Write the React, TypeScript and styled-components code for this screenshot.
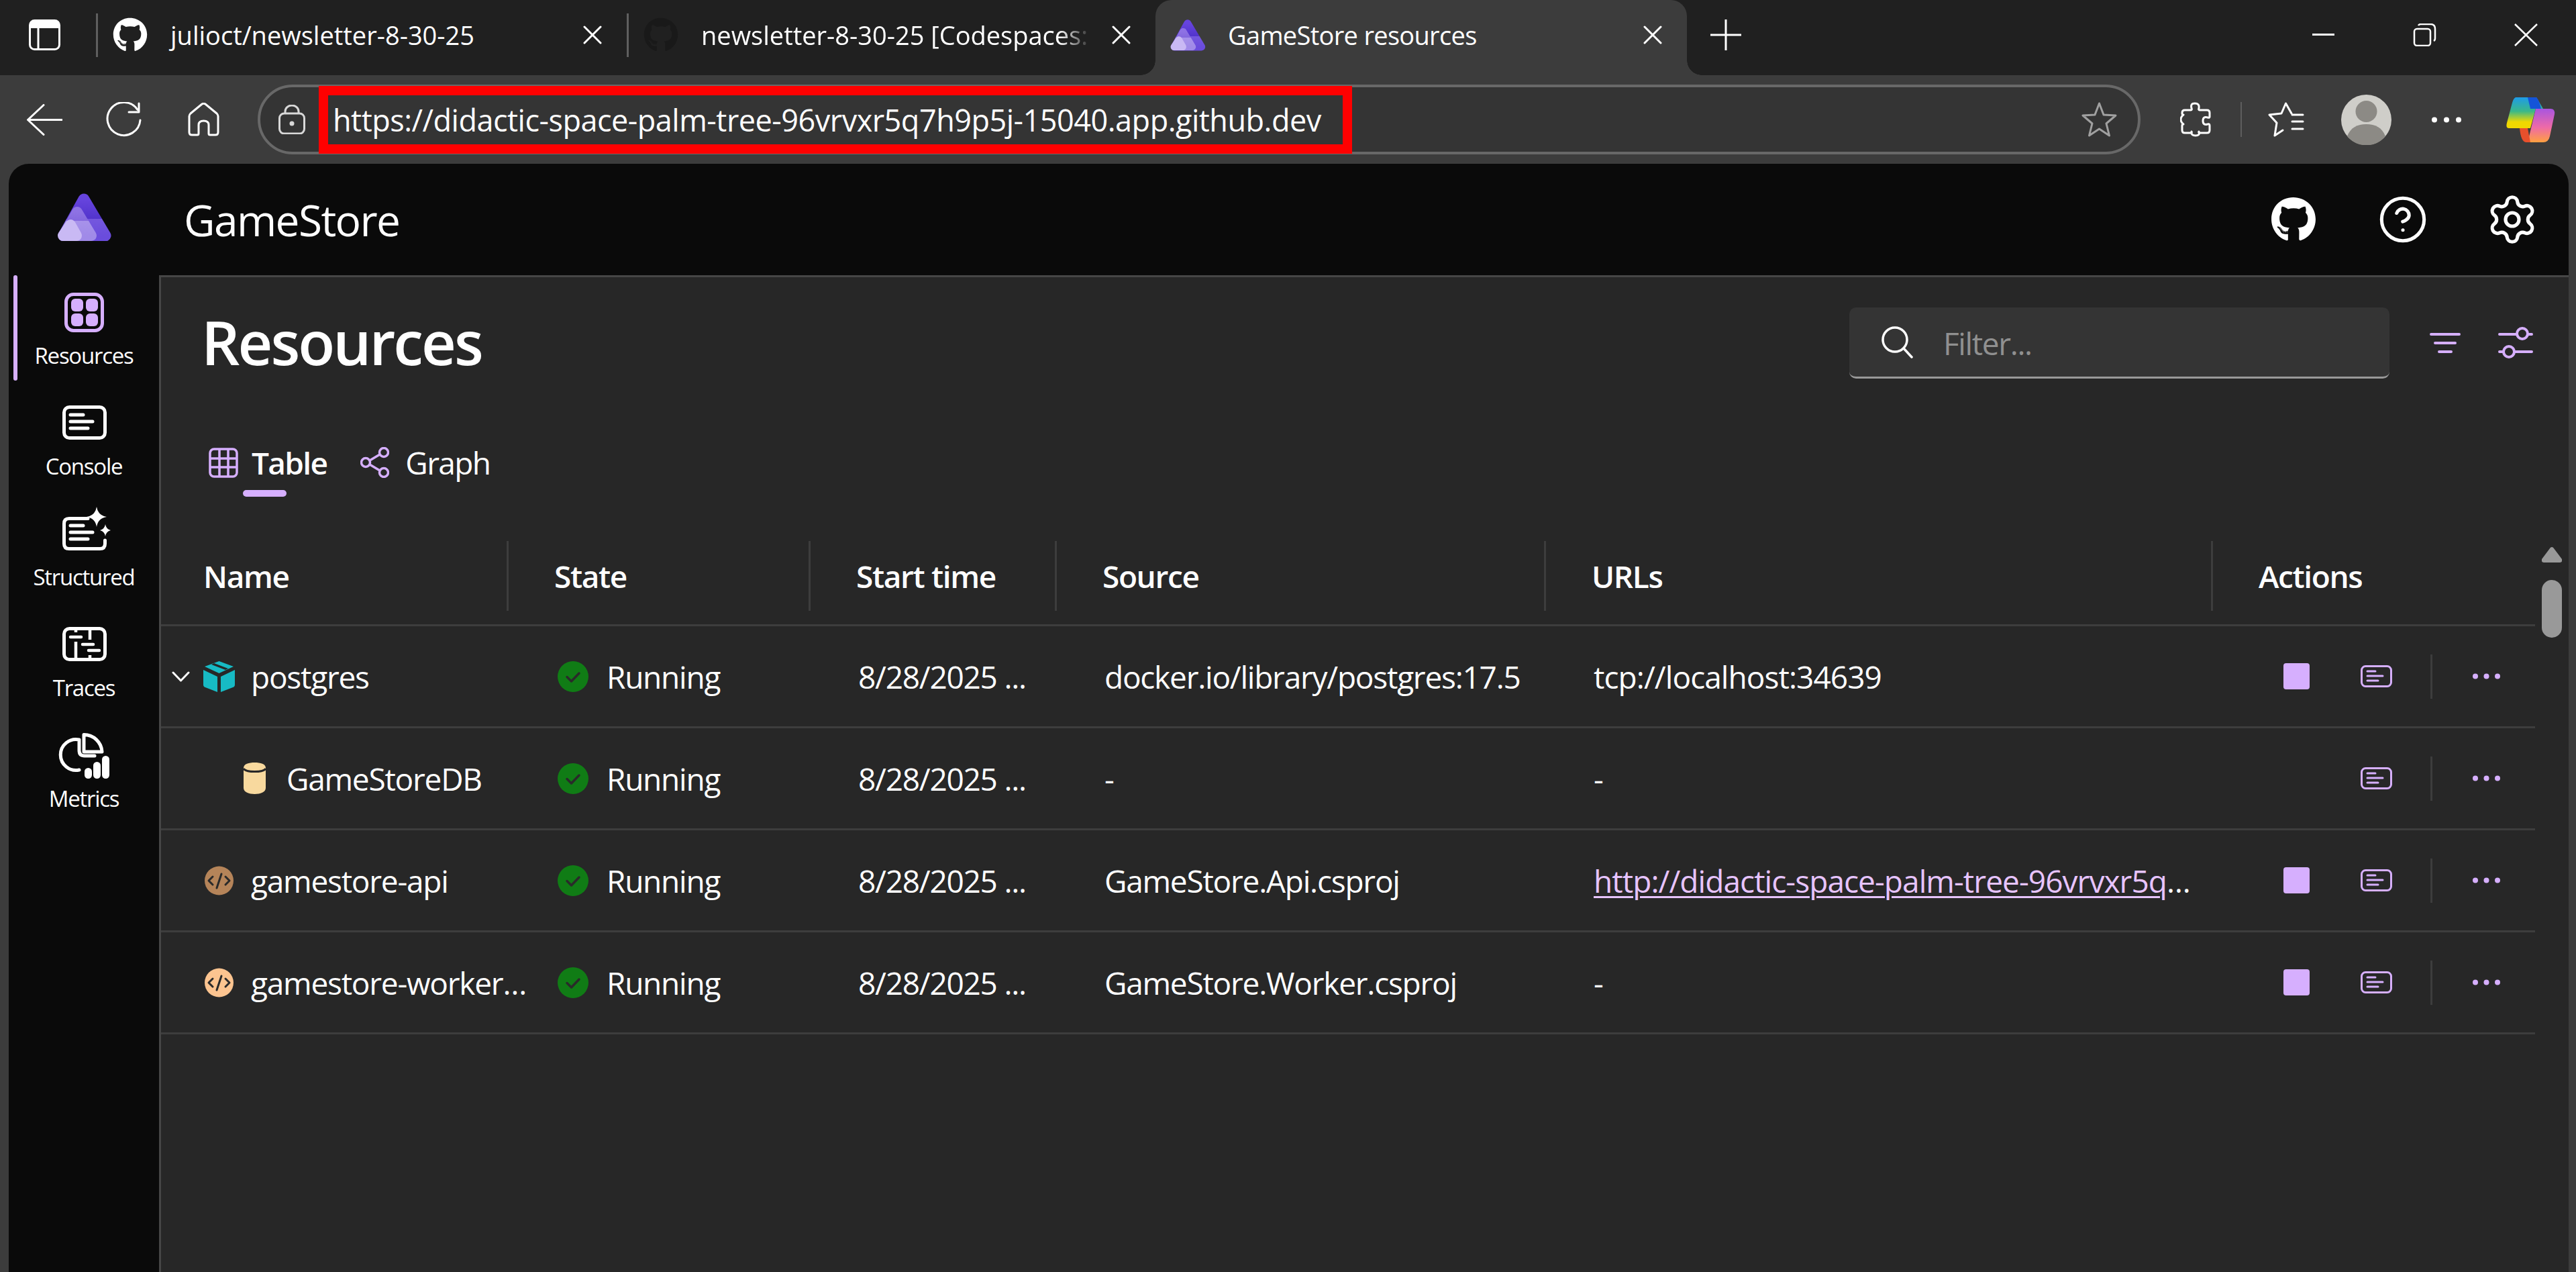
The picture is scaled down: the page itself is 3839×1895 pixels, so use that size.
import React from "react";
import styled, { createGlobalStyle } from "styled-components";
import { FaGithub } from "react-icons/fa";
import { Settings, CircleHelp } from "lucide-react";

const accent = "#d6affe";
const font = `"Open Sans", "Noto Sans", "Liberation Sans", sans-serif`;

const Global = createGlobalStyle`
  html, body { margin: 0; padding: 0; background: #3c3c3c; }
  body { width: 3839px; height: 1895px; overflow: hidden; font-family: ${font}; color: #fff; }
  * { box-sizing: border-box; }
  #root { height: 100%; }
`;

const Page = styled.div`display: flex; flex-direction: column; height: 1895px; width: 3839px;`;

/* ---------- tab strip ---------- */
const TabStrip = styled.div`
  height: 112px; background: #202020; display: flex; align-items: center; flex: none;
`;
const SidebarToggle = styled.svg`width: 47px; height: 46px; margin: 0 53px 8px 43px; flex: none;`;
const TabDivider = styled.div`width: 3px; height: 65px; margin-bottom: 8px; background: #5f5f5f; flex: none;`;
const Tab = styled.div<{ $width: number; $active?: boolean }>`
  position: relative;
  width: ${p => p.$width}px; height: 112px; flex: none;
  display: flex; align-items: center;
  padding: 0 37px 8px 22px;
  background: ${p => (p.$active ? "#3c3c3c" : "transparent")};
  border-radius: ${p => (p.$active ? "24px 24px 0 0" : "0")};
  ${p => p.$active ? `
    &::before, &::after { content: ""; position: absolute; bottom: 0; width: 22px; height: 22px; }
    &::before { left: -22px; background: radial-gradient(circle at 0 0, transparent 21.5px, #3c3c3c 22px); }
    &::after { right: -22px; background: radial-gradient(circle at 100% 0, transparent 21.5px, #3c3c3c 22px); }
  ` : ""}
`;
const TabIcon = styled.div<{ $color: string }>`
  width: 52px; height: 52px; flex: none; display: flex; align-items: center; justify-content: center; color: ${p => p.$color};
  margin-right: 34px; font-size: 54px;
`;
const TabTitle = styled.div<{ $fade?: boolean; $ls: number }>`
  flex: 1; min-width: 0; white-space: nowrap;
  font-size: 38px; letter-spacing: ${p => p.$ls}em; color: #fff; line-height: 52px;
  ${p => (p.$fade ? "mask-image: linear-gradient(to right, #000 88%, transparent 96%);" : "")}
`;
const CloseGlyph = styled.svg`width: 28px; height: 28px; flex: none; margin-left: 6px;`;
const NewTab = styled.svg`width: 46px; height: 46px; margin: 0 0 8px 35px; flex: none;`;
const WindowControls = styled.div`margin-left: auto; display: flex; align-items: center; margin-right: 57px; margin-bottom: 8px;`;
const WindowGlyph = styled.svg<{ $gap: number }>`width: 35px; height: 34px; margin-left: ${p => p.$gap}px; flex: none;`;

/* ---------- toolbar ---------- */
const Toolbar = styled.div`height: 132px; flex: none; background: #3c3c3c; display: flex; align-items: center; padding-left: 40px;`;
const ToolIcon = styled.svg<{ $ml?: number }>`flex: none; margin-left: ${p => p.$ml ?? 0}px;`;
const AddressBar = styled.div`
  width: 2806px; height: 104px; margin-left: 57px; flex: none;
  background: #343434; border: 4px solid #686868; border-radius: 52px;
  display: flex; align-items: center; padding-left: 27px;
`;
const UrlHighlight = styled.div`
  width: 1540px; height: 101px; margin: 0 0 0 20px; flex: none;
  border: 14px solid #ff0000; display: flex; align-items: center; padding-left: 7px;
  font-size: 45px; letter-spacing: -0.011em; color: #fff; white-space: nowrap;
`;
const ToolSep = styled.div`width: 2px; height: 52px; background: #5e5e5e; margin-left: 44px; flex: none;`;

/* ---------- app ---------- */
const AppFrame = styled.div`
  flex: 1; min-height: 0; margin: 0 11px 0 13px; background: #0a0a0a;
  border-radius: 30px 30px 0 0; display: flex; flex-direction: column; overflow: hidden;
`;
const AppHeader = styled.header`height: 166px; flex: none; display: flex; align-items: center; padding: 0 51px 0 73px;`;
const AppLogo = styled.svg`width: 80px; height: 71px; flex: none; margin-bottom: 8px;`;
const AppName = styled.div`font-size: 64px; letter-spacing: -0.025em; margin-left: 108px; line-height: 80px; margin-top: 2px;`;
const HeaderActions = styled.div`margin-left: auto; display: flex; align-items: center; gap: 97px;`;
const HeaderIcon = styled.div`
  width: 66px; height: 68px; display: flex; align-items: center; justify-content: center; color: #fff;
  svg { flex: none; }
`;

const Body = styled.div`flex: 1; min-height: 0; display: flex;`;
const Sidebar = styled.nav`width: 224px; flex: none; display: flex; flex-direction: column; gap: 8px;`;
const NavItem = styled.div<{ $active?: boolean }>`
  position: relative; height: 157px; display: flex; flex-direction: column; align-items: center; padding-top: 15px;
  ${p => p.$active ? `&::before { content: ""; position: absolute; left: 7px; top: 0; bottom: 0; width: 6px; border-radius: 3px; background: ${accent}; }` : ""}
`;
const NavIcon = styled.svg`width: 80px; height: 80px; flex: none;`;
const NavLabel = styled.div`font-size: 33px; letter-spacing: -0.038em; line-height: 44px; margin-top: 3px; white-space: nowrap; color: #fff;`;

const Main = styled.main`
  flex: 1; min-width: 0; background: #272727; border-left: 3px solid #464646; border-top: 3px solid #464646;
  display: flex; flex-direction: column;
`;
const PageHead = styled.div`display: flex; align-items: center; height: 106px; margin-top: 45px; padding-left: 60px; flex: none;`;
const PageTitle = styled.h1`margin: 0 0 4px; font-size: 90px; font-weight: 600; letter-spacing: -0.033em; line-height: 106px; color: #fff;`;
const FilterBox = styled.div`
  margin-left: auto; width: 805px; height: 106px; background: #343434; border-radius: 10px;
  border-bottom: 3px solid #999; display: flex; align-items: center; padding-left: 48px; flex: none;
`;
const FilterText = styled.div`font-size: 46px; letter-spacing: -0.03em; color: #909090; margin-left: 45px; margin-top: 3px;`;
const HeadIcon = styled.svg<{ $ml: number; $mr?: number }>`margin-left: ${p => p.$ml}px; margin-right: ${p => p.$mr ?? 0}px; flex: none;`;

const ViewTabs = styled.div`display: flex; height: 126px; margin-top: 95px; padding-left: 71px; flex: none; align-items: flex-start;`;
const ViewTab = styled.div<{ $active?: boolean; $gap: number }>`
  position: relative; display: flex; align-items: center; height: 60px; margin-right: 50px;
  font-size: 46px; letter-spacing: -0.036em; font-weight: ${p => (p.$active ? 600 : 400)}; color: #fff;
  gap: ${p => p.$gap}px;
  ${p => p.$active ? `&::after { content: ""; position: absolute; left: 51px; top: 71px; width: 65px; height: 10px; border-radius: 5px; background: ${accent}; }` : ""}
`;

const TableArea = styled.div`flex: 1; min-height: 0; display: flex;`;
const Table = styled.div`width: 3538px; flex: none;`;
const Columns = `display: grid; grid-template-columns: 515px 450px 367px 729px 994px 483px;`;
const HeadRow = styled.div`${Columns} height: 148px; align-items: center; border-bottom: 3px solid #3d3d3d;`;
const HeadCell = styled.div<{ $first?: boolean }>`
  height: 104px; display: flex; align-items: center; padding-left: ${p => (p.$first ? 63 : 68)}px;
  ${p => (p.$first ? "" : "border-left: 3px solid #3d3d3d;")}
  font-size: 46px; font-weight: 600; letter-spacing: -0.03em; color: #fff;
`;
const Row = styled.div`${Columns} height: 152px; align-items: center; border-bottom: 3px solid #3d3d3d;`;
const Cell = styled.div`
  padding-left: 74px; font-size: 46px; letter-spacing: -0.027em; color: #fff; white-space: nowrap;
  display: flex; align-items: center;
`;
const NameCell = styled.div<{ $indent: number }>`
  padding-left: ${p => p.$indent}px; display: flex; align-items: center; font-size: 46px; letter-spacing: -0.027em; color: #fff;
`;
const Chevron = styled.svg`width: 27px; height: 16px; margin-right: 20px; flex: none;`;
const ResIconSlot = styled.div`width: 47px; height: 47px; flex: none; display: flex; align-items: center; justify-content: center; margin-right: 24px;`;
const ResName = styled.div`white-space: nowrap; flex: none;`;
const StateCell = styled(Cell)`padding-left: 76px; gap: 27px;`;
const UrlCell = styled.div`
  margin-left: 74px; font-size: 46px; letter-spacing: -0.0205em; color: #fff; white-space: nowrap;
`;
const UrlLink = styled.a`color: #e7c4ff; text-decoration: underline; text-decoration-thickness: 3px; text-underline-offset: 5px;`;
const ActionsCell = styled.div`padding-left: 108px; display: flex; align-items: center;`;
const StopButton = styled.div<{ $hidden?: boolean }>`
  width: 39px; height: 39px; border-radius: 4px; flex: none; background: ${p => (p.$hidden ? "transparent" : accent)};
`;
const LogIcon = styled.svg`width: 47px; height: 33px; margin-left: 76px; flex: none;`;
const ActionSep = styled.div`width: 3px; height: 66px; background: #3d3d3d; margin-left: 57px; flex: none;`;
const MoreIcon = styled.svg`width: 41px; height: 9px; margin-left: 60px; flex: none;`;

const Scrollbar = styled.div`width: 30px; margin-left: 10px; padding-top: 30px; display: flex; flex-direction: column; align-items: center; flex: none;`;
const ScrollArrow = styled.svg`width: 30px; height: 23px; flex: none;`;
const ScrollThumb = styled.div`width: 30px; height: 86px; border-radius: 15px; background: #999; margin-top: 26px; flex: none;`;

/* ---------- drawings ---------- */
const AspireLogo = ({ outlined }: { outlined?: boolean }) => (
  <>
    <defs>
      <linearGradient id={outlined ? "bigT" : "big"} x1="0" y1="0" x2="0" y2="1">
        <stop offset="0" stopColor="#6644dd" />
        <stop offset="0.54" stopColor="#5234cc" />
        <stop offset="0.545" stopColor="#7457de" />
        <stop offset="1" stopColor="#6a4cdc" />
      </linearGradient>
      <linearGradient id={outlined ? "midT" : "mid"} x1="0" y1="0" x2="0" y2="1">
        <stop offset="0" stopColor="#8e72e4" />
        <stop offset="0.38" stopColor="#8468de" />
        <stop offset="0.385" stopColor="#a792ea" />
        <stop offset="1" stopColor="#a08ae8" />
      </linearGradient>
    </defs>
    <path d="M39 9 L71 63 H9 Z" fill={`url(#${outlined ? "bigT" : "big"})`} stroke={`url(#${outlined ? "bigT" : "big"})`} strokeWidth="17" strokeLinejoin="round" />
    <path d="M29 28 L50 63 H9 Z" fill={`url(#${outlined ? "midT" : "mid"})`} stroke={`url(#${outlined ? "midT" : "mid"})`} strokeWidth="16" strokeLinejoin="round" />
    <path d="M19 47 L28 63 H8 Z" fill="#c9b9f4" stroke="#c9b9f4" strokeWidth="16" strokeLinejoin="round" />
  </>
);

const Cross = () => (
  <CloseGlyph viewBox="0 0 28 28" fill="none" stroke="#fff" strokeWidth="3" strokeLinecap="round">
    <path d="M2 2 26 26M26 2 2 26" />
  </CloseGlyph>
);

const Code = ({ color }: { color: string }) => (
  <svg width="43" height="44" viewBox="0 0 43 44" fill="none">
    <circle cx="21.5" cy="22" r="21.5" fill={color} />
    <path d="M12 16 6 22l6 6M31 16l6 6-6 6M25 12l-7 21" stroke="#2a2a2a" strokeWidth="3" strokeLinecap="round" strokeLinejoin="round" />
  </svg>
);
const Cube = () => (
  <svg width="47" height="46" viewBox="0 0 47 46">
    <path d="M23.5 0 45 8 23.5 18 2 8Z" fill="#17bac4" />
    <path d="M12 5 33 13 37 11 16 3Z" fill="#272727" />
    <path d="M0 13 21 23V46L3 39Q0 38 0 35Z" fill="#17bac4" />
    <path d="M47 13 26 23V46L44 39Q47 38 47 35Z" fill="#17bac4" />
  </svg>
);
const Cylinder = () => (
  <svg width="33" height="47" viewBox="0 0 33 47">
    <path d="M0 8C0 2 8 0 16.5 0S33 2 33 8V38C33 44 25 47 16.5 47S0 44 0 38Z" fill="#f8d99e" />
    <path d="M0 9C3 15 30 15 33 9" fill="none" stroke="#272727" strokeWidth="3" />
  </svg>
);
const StatusOk = () => (
  <svg width="46" height="46" viewBox="0 0 46 46" fill="none" style={{ flex: "none" }}>
    <circle cx="23" cy="23" r="23" fill="#107c15" />
    <path d="M14 23.5 20.5 30 32 18" stroke="#2a2a2a" strokeWidth="3.5" strokeLinecap="round" strokeLinejoin="round" />
  </svg>
);

const navLines = (
  <path d="M20 28H39M20 38H53M20 48H46" stroke="#fff" strokeWidth="5" strokeLinecap="round" />
);

const rows = [
  { key: "postgres", kind: "cube", source: "docker.io/library/postgres:17.5", url: "tcp://localhost:34639", link: false, stop: true },
  { key: "GameStoreDB", kind: "db", source: "-", url: "-", link: false, stop: false },
  { key: "gamestore-api", kind: "api", source: "GameStore.Api.csproj", url: "http://didactic-space-palm-tree-96vrvxr5q", link: true, stop: true },
  { key: "gamestore-worker…", kind: "worker", source: "GameStore.Worker.csproj", url: "-", link: false, stop: true },
];

export default function App() {
  return (
    <Page>
      <Global />
      <TabStrip>
        <SidebarToggle viewBox="0 0 47 46" fill="none">
          <rect x="1.5" y="1.5" width="44" height="43" rx="7" stroke="#fff" strokeWidth="3" />
          <path d="M3 3h41v10H3z" fill="#fff" />
          <path d="M14 13v31" stroke="#fff" strokeWidth="3" />
        </SidebarToggle>
        <TabDivider />
        <Tab $width={788}>
          <TabIcon $color="#fff"><FaGithub size={52} /></TabIcon>
          <TabTitle $ls={0}>julioct/newsletter-8-30-25</TabTitle>
          <Cross />
        </Tab>
        <TabDivider />
        <Tab $width={785}>
          <TabIcon $color="#191919"><FaGithub size={52} /></TabIcon>
          <TabTitle $fade $ls={0}>newsletter-8-30-25 [Codespaces: d</TabTitle>
          <Cross />
        </Tab>
        <Tab $width={792} $active>
          <TabIcon $color="#fff">
            <svg width="57" height="50" viewBox="-3 -3 86 77" style={{ flex: "none" }}><AspireLogo outlined /></svg>
          </TabIcon>
          <TabTitle $ls={-0.018}>GameStore resources</TabTitle>
          <Cross />
        </Tab>
        <NewTab viewBox="0 0 46 46" fill="none" stroke="#fff" strokeWidth="3">
          <path d="M23 0V46M0 23H46" />
        </NewTab>
        <WindowControls>
          <WindowGlyph $gap={0} viewBox="0 0 35 34" fill="none" stroke="#fff" strokeWidth="3"><path d="M1 16.5H34" /></WindowGlyph>
          <WindowGlyph $gap={116} viewBox="0 0 35 34" fill="none" stroke="#fff" strokeWidth="2.5">
            <rect x="2" y="8" width="24" height="25" rx="4" />
            <path d="M8 3Q9 1 12 1H26Q33 1 33 8V22Q33 25 31 26" />
          </WindowGlyph>
          <WindowGlyph $gap={116} viewBox="0 0 35 34" fill="none" stroke="#fff" strokeWidth="2.5"><path d="M1 1 34 33M34 1 1 33" /></WindowGlyph>
        </WindowControls>
      </TabStrip>

      <Toolbar>
        <ToolIcon width="53" height="47" viewBox="0 0 53 47" fill="none" stroke="#fff" strokeWidth="3" strokeLinecap="round" strokeLinejoin="round">
          <path d="M52 23.5H2M25 1.5 1.5 23.5 25 45.5" />
        </ToolIcon>
        <ToolIcon $ml={65} width="53" height="52" viewBox="0 0 53 52" fill="none" stroke="#fff" strokeWidth="3" strokeLinecap="round" strokeLinejoin="round">
          <path d="M51 27A24.5 24.5 0 1 1 47 11.5M49 2V15H34" />
        </ToolIcon>
        <ToolIcon $ml={69} width="47" height="50" viewBox="0 0 47 50" fill="none" stroke="#fff" strokeWidth="3" strokeLinejoin="round">
          <path d="M2 20Q2 18 4 16L21 2Q23.5 .5 26 2L43 16Q45 18 45 20V44Q45 48 41 48H33Q31 48 31 46V33Q31 27 23.5 27T16 33V46Q16 48 14 48H6Q2 48 2 44Z" />
        </ToolIcon>
        <AddressBar>
          <ToolIcon width="40" height="44" viewBox="0 0 40 44" fill="none" stroke="#d8d8d8" strokeWidth="3">
            <rect x="1.5" y="13" width="37" height="30" rx="7" />
            <path d="M10 13V10A10 9 0 0 1 30 10V13" />
            <circle cx="20" cy="28" r="3.5" fill="#d8d8d8" stroke="none" />
          </ToolIcon>
          <UrlHighlight>https://didactic-space-palm-tree-96vrvxr5q7h9p5j-15040.app.github.dev</UrlHighlight>
          <ToolIcon $ml={1087} width="53" height="52" viewBox="0 0 53 52" fill="none" stroke="#a0a0a0" strokeWidth="3" strokeLinejoin="round">
            <path d="M26.5 2 33 19 51 20 37 32 41.5 50 26.5 40 11.5 50 16 32 2 20 20 19Z" />
          </ToolIcon>
        </AddressBar>
        <ToolIcon $ml={59} width="46" height="52" viewBox="0 0 46 52" fill="none" stroke="#fff" strokeWidth="3" strokeLinejoin="round">
          <path d="M7 12H16Q18 12 17 9Q15 2 22 2T28 9Q27 12 29 12H40Q44 12 44 16V22Q44 24 41 23Q34 21 34 28T41 33Q44 32 44 35V42Q44 46 40 46H30Q27 46 28 44Q30 50 23 50T17 44Q18 46 16 46H7Q3 46 3 42V35Q3 33 5 33Q1 30 1 26T5 19Q3 19 3 17V16Q3 12 7 12Z" />
        </ToolIcon>
        <ToolSep />
        <ToolIcon $ml={39} width="54" height="52" viewBox="0 0 54 52" fill="none" stroke="#fff" strokeWidth="3" strokeLinecap="round" strokeLinejoin="round">
          <path d="M35 17 26.5 2 20 17 2 19 13 31 10 50 22 42M36 19H52M36 29H52M36 40H52" />
        </ToolIcon>
        <ToolIcon $ml={55} width="75" height="75" viewBox="0 0 75 75">
          <circle cx="37.5" cy="37.5" r="37.5" fill="#cfcec9" />
          <circle cx="37.5" cy="25" r="16" fill="#8c8a85" />
          <path d="M9 62C14 49 24 44 37.5 44S61 49 66 62A37 37 0 0 1 9 62Z" fill="#8c8a85" />
        </ToolIcon>
        <ToolIcon $ml={60} width="44" height="9" viewBox="0 0 44 9" fill="#fff">
          <circle cx="4" cy="4.5" r="4" /><circle cx="22" cy="4.5" r="4" /><circle cx="40" cy="4.5" r="4" />
        </ToolIcon>
        <ToolIcon $ml={67} width="73" height="67" viewBox="0 0 73 67">
          <defs>
            <linearGradient id="copA" x1="0" y1="0" x2="0" y2="1">
              <stop offset="0" stopColor="#1e9be8" />
              <stop offset="0.45" stopColor="#39b88a" />
              <stop offset="0.8" stopColor="#f0d800" />
            </linearGradient>
            <linearGradient id="copB" x1="0" y1="0" x2="0" y2="1">
              <stop offset="0" stopColor="#a855e0" />
              <stop offset="0.55" stopColor="#ee6aa8" />
              <stop offset="1" stopColor="#ffa040" />
            </linearGradient>
          </defs>
          <path d="M14 0H45L55 17H44L36 46H4Q-1 46 1 38L9 8Q11 1 14 0Z" fill="url(#copA)" />
          <path d="M32 0H45Q49 4 52 17H36Z" fill="#1454d8" />
          <path d="M44 17H66Q73 17 72 25L65 58Q63 67 55 67H32Z" fill="url(#copB)" />
          <path d="M20 46H32L36 67H30Q22 67 20 46Z" fill="#e8502c" />
        </ToolIcon>
      </Toolbar>

      <AppFrame>
        <AppHeader>
          <AppLogo viewBox="0 0 80 71"><AspireLogo /></AppLogo>
          <AppName>GameStore</AppName>
          <HeaderActions>
            <HeaderIcon><FaGithub size={68} /></HeaderIcon>
            <HeaderIcon><CircleHelp size={76} strokeWidth={1.6} /></HeaderIcon>
            <HeaderIcon><Settings size={80} strokeWidth={1.55} /></HeaderIcon>
          </HeaderActions>
        </AppHeader>
        <Body>
          <Sidebar>
            <NavItem $active>
              <NavIcon viewBox="0 0 80 80" fill="none">
                <rect x="13.5" y="13.5" width="54" height="54" rx="11" stroke={accent} strokeWidth="5" />
                <rect x="21" y="20" width="18" height="19" rx="6" fill={accent} />
                <rect x="43" y="20" width="18" height="19" rx="6" fill={accent} />
                <rect x="21" y="42" width="18" height="19" rx="6" fill={accent} />
                <rect x="43" y="42" width="18" height="19" rx="6" fill={accent} />
              </NavIcon>
              <NavLabel>Resources</NavLabel>
            </NavItem>
            <NavItem>
              <NavIcon viewBox="0 0 80 80" fill="none">
                <rect x="10.5" y="16.5" width="61" height="46" rx="8" stroke="#fff" strokeWidth="5" />
                {navLines}
              </NavIcon>
              <NavLabel>Console</NavLabel>
            </NavItem>
            <NavItem>
              <NavIcon viewBox="0 0 80 80" fill="none">
                <path d="M46 17.5H18Q10.5 17.5 10.5 25V55Q10.5 62.5 18 62.5H64Q71.5 62.5 71.5 55V50" stroke="#fff" strokeWidth="5" strokeLinecap="round" />
                {navLines}
                <path d="M59 0Q61 13 74 15 61 17 59 30 57 17 44 15 57 13 59 0Z" fill="#fff" />
                <path d="M72 26Q73 33 80 35 73 37 72 44 71 37 64 35 71 33 72 26Z" fill="#fff" />
              </NavIcon>
              <NavLabel>Structured</NavLabel>
            </NavItem>
            <NavItem>
              <NavIcon viewBox="0 0 80 80" fill="none" stroke="#fff" strokeWidth="5" strokeLinecap="round">
                <rect x="10.5" y="16.5" width="61" height="46" rx="8" />
                <path d="M20 29H36M38 40H54M47 49H63" strokeWidth="4.5" />
                <path d="M28 17V22M28 36V62M49 17V33M49 56V62" strokeWidth="4.5" strokeLinecap="butt" />
              </NavIcon>
              <NavLabel>Traces</NavLabel>
            </NavItem>
            <NavItem>
              <NavIcon viewBox="0 0 80 80" fill="none" stroke="#fff" strokeWidth="5" strokeLinecap="round">
                <path d="M40 9.5A27 27 0 0 1 67 35H40Z" strokeLinejoin="round" />
                <path d="M33 17A23 23 0 1 0 33 62M33 17V33Q33 41 41 41H56" />
                <rect x="41" y="59" width="11" height="16" rx="5.5" fill="#fff" stroke="none" />
                <rect x="54" y="50" width="11" height="25" rx="5.5" fill="#fff" stroke="none" />
                <rect x="67" y="41" width="11" height="34" rx="5.5" fill="#fff" stroke="none" />
              </NavIcon>
              <NavLabel>Metrics</NavLabel>
            </NavItem>
          </Sidebar>
          <Main>
            <PageHead>
              <PageTitle>Resources</PageTitle>
              <FilterBox>
                <svg width="47" height="48" viewBox="0 0 47 48" fill="none" stroke="#fff" strokeWidth="3.5" strokeLinecap="round">
                  <circle cx="20" cy="20" r="18" />
                  <path d="M33 33 45 46" />
                </svg>
                <FilterText>Filter...</FilterText>
              </FilterBox>
              <HeadIcon $ml={60} width="46" height="32" viewBox="0 0 46 32" stroke={accent} strokeWidth="4" strokeLinecap="round">
                <path d="M2 3H44M8 16H38M14 29H32" />
              </HeadIcon>
              <HeadIcon $ml={56} $mr={53} width="52" height="50" viewBox="0 0 52 50" fill="none" stroke={accent} strokeWidth="4" strokeLinecap="round">
                <path d="M2 12H28M44 12H50M2 38H8M24 38H50" />
                <circle cx="36" cy="11" r="8" />
                <circle cx="16" cy="38" r="8" />
              </HeadIcon>
            </PageHead>
            <ViewTabs>
              <ViewTab $active $gap={20}>
                <svg width="44" height="45" viewBox="0 0 44 45" fill="none" stroke={accent} strokeWidth="3.5">
                  <rect x="2" y="2" width="40" height="41" rx="6" />
                  <path d="M16 2V43M29 2V43M2 16H42M2 29H42" />
                </svg>
                Table
              </ViewTab>
              <ViewTab $gap={24}>
                <svg width="43" height="46" viewBox="0 0 43 46" fill="none" stroke={accent} strokeWidth="3.5">
                  <circle cx="35" cy="8" r="6.5" />
                  <circle cx="8" cy="23" r="6.5" />
                  <circle cx="35" cy="38" r="6.5" />
                  <path d="M14 20 29 11M14 26 29 35" />
                </svg>
                Graph
              </ViewTab>
            </ViewTabs>
            <TableArea>
              <Table>
                <HeadRow>
                  <HeadCell $first>Name</HeadCell>
                  <HeadCell>State</HeadCell>
                  <HeadCell>Start time</HeadCell>
                  <HeadCell>Source</HeadCell>
                  <HeadCell>URLs</HeadCell>
                  <HeadCell>Actions</HeadCell>
                </HeadRow>
                {rows.map(r => (
                  <Row key={r.key}>
                    <NameCell $indent={r.kind === "cube" ? 16 : r.kind === "db" ? 116 : 63}>
                      {r.kind === "cube" && (
                        <Chevron viewBox="0 0 27 16" fill="none" stroke="#fff" strokeWidth="3" strokeLinecap="round" strokeLinejoin="round">
                          <path d="M2 2 13.5 14 25 2" />
                        </Chevron>
                      )}
                      <ResIconSlot>
                        {r.kind === "cube" && <Cube />}
                        {r.kind === "db" && <Cylinder />}
                        {r.kind === "api" && <Code color="#b58459" />}
                        {r.kind === "worker" && <Code color="#fcc490" />}
                      </ResIconSlot>
                      <ResName>{r.key}</ResName>
                    </NameCell>
                    <StateCell><StatusOk />Running</StateCell>
                    <Cell>8/28/2025 ...</Cell>
                    <Cell>{r.source}</Cell>
                    <UrlCell>{r.link ? <><UrlLink href="#">{r.url}</UrlLink>…</> : r.url}</UrlCell>
                    <ActionsCell>
                      <StopButton $hidden={!r.stop} />
                      <LogIcon viewBox="0 0 47 33" fill="none" stroke={accent} strokeWidth="3" strokeLinecap="round">
                        <rect x="1.5" y="1.5" width="44" height="30" rx="6" />
                        <path d="M10 9H22M10 16H33M10 23H26" />
                      </LogIcon>
                      <ActionSep />
                      <MoreIcon viewBox="0 0 41 9" fill={accent}>
                        <circle cx="4" cy="4.5" r="4" /><circle cx="20.5" cy="4.5" r="4" /><circle cx="37" cy="4.5" r="4" />
                      </MoreIcon>
                    </ActionsCell>
                  </Row>
                ))}
              </Table>
              <Scrollbar>
                <ScrollArrow viewBox="0 0 30 23" fill="#999"><path d="M15 0Q17 0 18 2L30 18Q31 23 27 23H3Q-1 23 0 18L12 2Q13 0 15 0Z" /></ScrollArrow>
                <ScrollThumb />
              </Scrollbar>
            </TableArea>
          </Main>
        </Body>
      </AppFrame>
    </Page>
  );
}
